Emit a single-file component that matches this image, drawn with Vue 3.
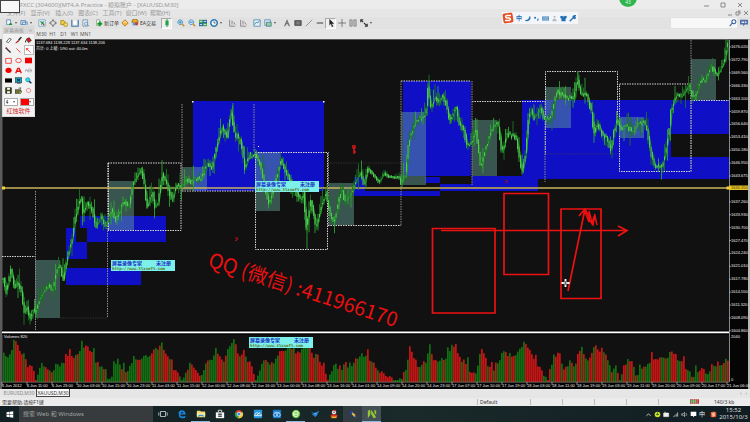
<script setup>
const icons = {
  plusDoc: [['M2 1h5v6H2z', '#e9f4ff', '#5d7fa5'], ['M5 7h4M7 5v4', 'none', '#18972b', 2]],
  windows: [['M1 2h6v5H1zM3 4h6v4H3z', '#dcebfa', '#4f7fae']],
  market: [['M1 1h8v8H1z', '#eef6fb', '#6fa3c4'], ['M3 3l4 3M4 7l3-4', 'none', '#2c9348', 1.5], ['M6 6h2v2H6z', '#c34a24']],
  target: [['M5 2a3 3 0 1 0 .1 0M5 0v3M5 7v3M0 5h3M7 5h3', 'none', '#666']],
  folderStar: [['M1 2h4l1 1v4H1z', '#f2cf48', '#a98318'], ['M5 5h4v4H5z', '#ffe789', '#ad8a1c']],
  panel: [['M1 1v8h8V1', 'none', '#3d78ac', 1.4], ['M3 2h4v5H3z', '#fff']],
  tester: [['M1 1h6v8H1z', '#dcebf7', '#7693ac'], ['M5 4a2 2 0 1 0 .1 0M7 7l2 2', 'none', '#688caf']],
  order: [['M2 1h4v7H2z', '#fff', '#8b9a8b'], ['M3 6h6M6 3v6', 'none', '#129b21', 2.4]],
  diamond: [['M5 1l4 4-4 4-4-4z', '#f4b63b', '#b0720c'], ['M3 5l2-2 2 2', 'none', '#fff']],
  robot: [['M1 4a4 4 0 0 1 8 0z', '#f0b72f', '#8b641a'], ['M2 5h5v3H2z', '#54a0da'], ['M7 4a2 2 0 1 0 .1 0z', '#d23a24']],
  candle: [['M5 0v10', 'none', '#188a31'], ['M3 2h4v6H3z', '#25a344']],
  bars: [['M2 1v8h7M5 2v5M7 4l2 3', 'none', '#777']],
  zoomIn: [['M4 1a3 3 0 1 0 .1 0', '#c6e6fa', '#3e88bd'], ['M6 6l3 3', 'none', '#c79525', 2], ['M2 4h4M4 2v4', 'none', '#247fb4']],
  zoomOut: [['M4 1a3 3 0 1 0 .1 0', '#c6e6fa', '#3e88bd'], ['M6 6l3 3', 'none', '#c79525', 2], ['M2 4h4', 'none', '#247fb4']],
  tiles: [['M0 1h5v4H0z', '#3ea147'], ['M5 1h5v4H5z', '#2c65b5'], ['M0 5h5v4H0z', '#2c65b5'], ['M5 5h5v4H5z', '#3ea147'], ['M1 3h3M6 3h3M1 7h3M6 7h3', 'none', '#fff']],
  clock: [['M5 1a4 4 0 1 0 .1 0', '#f4faff', '#2874af', 1.8], ['M5 3v2h2', 'none', '#444']],
  chart: [['M1 1h8v8H1z', '#e5f3fc', '#4c86af'], ['M2 7l2-3 2 1 2-3', 'none', '#3475a3']],
  picture: [['M1 1h7v7H1z', '#e5f3fc', '#4c86af'], ['M3 4h6v5H3z', '#9bcf8d', '#3c79a1']],
  textA: [['M2 9l3-7 3 7M3 6h4', 'none', '#666', 1.3]],
  label: [['M1 2h8v6H1z', '#666', '#444'], ['M3 4h4M3 6h4', 'none', '#aaa', .6]],
  slash: [['M1 9l8-8', 'none', '#888']],
  dash: [['M1 5h8', 'none', '#444', 1.3]],
  pointer: [['M3 0v8l2-2 1 4 2-1-2-3h3z', '#222']],
  cross: [['M5 0v10M0 5h10', 'none', '#666']],
  columns: [['M1 1h3v8H1zM6 1h3v8H6z', '#bbb', '#888']],
  arrows: [['M1 1l3 3M1 4V1h3M9 9L5 5M9 6v3H6', 'none', '#333', 1.4]],
  eraser: [['M2 7l4-5 3 1-4 5z', '#fff', '#333']],
  brush: [['M9 0L5 5', 'none', '#222', 2], ['M5 4l1 2-4 3H0z', '#b02a20']],
  bucket: [['M2 3l4-2 3 4-4 3z', '#e01818', '#222'], ['M2 4L0 8', 'none', '#222', 1.4]],
  pen: [['M1 1l7 7', 'none', '#333', 2], ['M1 1l2 1', 'none', '#d22', 1.5]],
  line: [['M2 2l6 6', 'none', '#e11']],
  arrow: [['M8 8L2 2M2 5V2h3', 'none', '#e11']],
  box: [['M1 2h8v7H1z', 'none', '#e11']],
  ring: [['M5 2a4 3 0 1 0 .1 0', 'none', '#e11']],
  redBox: [['M0 1h10v8H0z', '#f00000']],
  redOval: [['M5 1a4.5 3.800 0 1 0 .1 0z', '#f00000']],
  redA: [['M1 9l3-7h2l3 7M3 6h4', 'none', '#e11', 2]],
  grayText: [['M0 7l2-4 2 4M5 3h4v4H5zM0 5h10', 'none', '#aaa']],
  blackBox: [['M0 2h10v6H0z', '#000']],
  screen: [['M0 1h10v7H0z', '#13a8c5', '#333'], ['M3 3l4 3M3 6l4-3', 'none', '#123', 1.4], ['M3 9h5', 'none', '#333']],
  lens: [['M4 1a3 3 0 1 0 .1 0z', '#2de0e6', '#167ba8'], ['M6 6l3 3', 'none', '#125', 2]],
  save: [['M1 1h8v8H1z', '#454a12', '#111'], ['M3 1h4v3H3zM3 6h4v3H3z', '#fff']],
  open: [['M0 4h8v5H0z', '#777b1f', '#333'], ['M2 4l1 2h7L8 9', '#e7de66', '#444'], ['M5 2l3-1v2', 'none', '#333']],
  circle: [['M5 2a3 3 0 1 0 .1 0', 'none', '#e55']]
}
const toolbar = [
  ['plusDoc', 'New chart', 'wide'], ['windows', 'Profiles', 'wide sepS'], ['market', 'Market watch'], ['target', 'Data window'], ['folderStar', 'Navigator'], ['panel', 'Terminal'], ['tester', 'Strategy tester', 'sep'],
  ['order', '新订单', 'order'], ['diamond', 'Editor'], ['robot', 'EA交易', 'robot sep'],
  ['candle', 'Candles', 'pressed sepS'], ['zoomIn', 'Zoom in'], ['zoomOut', 'Zoom out'], ['tiles', 'Tile windows'], ['clock', 'Periods', 'wide sepS'],
  ['bars', 'Auto scroll'], ['bars', 'Chart shift', 'sepS'], ['chart', 'Indicators'], ['picture', 'Templates', 'wide sep'],
  ['textA', 'Text'], ['label', 'Label'], ['slash', 'Trend line'], ['dash', 'Horizontal line'], ['pointer', 'Cursor', 'pressed'], ['cross', 'Crosshair'], ['columns', 'Channel'], ['arrows', 'Arrows', 'wide sepS']
]
const palette = ['eraser', 'brush', 'bucket', 'pen', 'line', 'arrow', 'box', 'ring', 'redBox', 'redOval', 'redA', 'grayText', 'blackBox', 'screen', 'lens', 'save', 'open', 'circle']
const menus = ['文件(F)', '显示(V)', '插入(I)', '图表(C)', '工具(T)', '窗口(W)', '帮助(H)']
const frames = ['M30', 'H1', 'D1', 'W1', 'MN1']

const seeded = seed => () => (seed = (seed * 16807) % 2147483647) / 2147483647
const at = (pts, x) => {
  let i = 0
  while (i < pts.length - 2 && pts[i + 1][0] < x) i++
  const [x0, y0] = pts[i]
  const [x1, y1] = pts[i + 1]
  return y0 + ((y1 - y0) * (x - x0)) / (x1 - x0)
}
const pairs = s => s.trim().split(/\s+/).map(p => p.split(',').map(Number))

const price = pairs(`3,283 5,277 7,293 12,269 16,288 17,282 20,285 23,293 25,311 28,307 31,320 35,309 37,313 40,300 45,290 50,285 53,291 59,265 62,268 64,281 68,258 73,240
74,233 76,218 79,207 82,196 84,213 88,202 93,208 97,226 102,217 107,225 113,210 117,220 125,200 130,207 134,183 138,176 142,168 145,180 148,207 153,193 156,207 159,203 163,175 168,183 173,201 177,185 182,187 188,178 192,183 197,178 202,180 208,163 213,168 218,145 223,127 228,137 232,110 235,131 242,142 246,168 250,155
257,155 262,167 265,182 270,203 275,188 282,160 288,173 293,185 302,200 305,192 307,230 312,200 317,227 322,207 327,193 332,217 335,222 343,187 346,202 353,192 357,180 362,172 365,185 369,168 380,182 385,173 390,177 400,177 402,183 407,173 410,140 415,125 417,121 427,115 429,88 432,107 436,97 440,103 443,95 447,103 451,122 457,107 460,122
465,130 468,145 472,143 477,130 480,153 482,168 487,147 494,125 499,123 503,153 508,133 517,137 520,153 523,173 527,150 529,120 532,110 535,118 542,107 545,119 552,118 558,90 563,95 568,97 575,99 578,78 582,93 588,95 593,113 595,136 598,122 604,135 608,138 612,150 615,130 618,120 623,130 628,125 633,132 640,123 645,122 648,128 652,153 656,166 663,167 667,150 671,125 672,110 677,95 682,97 690,85 695,99 702,80 707,80 712,65 718,76 725,62 728,48`)
const r1 = seeded(77)
let wickA = ''
let wickB = ''
let body = ''
for (let x = 3; x <= 728; x += 1.5) {
  const quiet = x > 370 && x < 401 ? 0.3 : 1
  const y = at(price, x)
  const n = at(price, x + 1.5)
  const j = (r1() - 0.5) * 4 * quiet
  const up = (r1() * 5 + r1() ** 4 * 12) * quiet
  const down = (r1() * 5 + r1() ** 4 * 12) * quiet
  const seg = `M${x.toFixed(1)} ${(Math.min(y, n) - up).toFixed(1)}V${(Math.max(y, n) + down).toFixed(1)}`
  if (r1() > 0.4) wickA += seg
  else wickB += seg
  body += `M${x.toFixed(1)} ${(y + j - 1).toFixed(1)}V${(n + j + 1.4).toFixed(1)}`
}
wickB += 'M307 228V249M729 40V60M429 81V90M233 103V114M578 72V80'
const priceLine = 'M' + price.map(p => p.join(' ')).join('L')

const volume = pairs(`3,356 7,355 11,348 13,340 17,343 20,356 23,353 27,368 32,368 34,380 38,371 43,365 48,371 52,375 54,365 62,366 65,352 70,358 78,356 82,348 86,345 90,350 95,361 102,370 108,381 111,377 116,358 120,371 127,371 133,361 140,358 150,355 157,348 160,342 163,350 168,355 173,368 178,378 183,378 190,363 197,371 200,378 204,366 210,361 218,353 223,360 228,350 233,340 237,353 243,355 250,365
255,380 263,358 268,365 273,365 277,355 287,351 293,350 300,353 307,341 312,355 317,356 323,370 328,381 333,365 342,368 350,365 357,358 364,354 370,361 377,368 383,375 392,381 402,381 405,371 409,351 413,358 418,368 425,361 430,349 433,360 442,361 452,346 457,355 462,361 467,366 474,378 480,350 487,365 493,368 498,361
503,351 508,355 513,358 518,351 523,341 528,348 533,358 538,366 543,378 547,380 553,354 558,360 562,368 568,363 573,365 578,355 583,356 588,361 594,346 602,351 607,361 610,370 615,368 619,380 623,368 630,361 636,378 642,365 647,365 650,358 660,360 667,356 672,350 677,358 683,365 692,378 697,371 703,371 707,376 713,368 718,371 722,361 728,363`)
const redRuns = pairs('14,22 25,36 45,49 51,53 65,74 77,79 84,93 96,99 103,105 120,123 125,127 137,141 150,155 158,160 163,169 171,178 186,188 191,201 206,209 216,222 225,227 235,238 241,244 247,254 264,267 271,273 279,284 290,292 295,300 308,314 317,328 338,341 344,347 354,357 366,370 373,376 379,392 402,404 409,419 422,424 431,436 442,444 452,460 462,466 469,474 481,486 489,493 495,497 505,508 511,514 525,542 547,550 554,560 563,566 570,572 576,580 583,585 588,592 595,602 605,607 611,613 616,618 623,626 629,632 634,637 642,644 651,660 664,666 671,676 680,687 690,693 698,704 711,713 717,719 723,725 727,729')
const r2 = seeded(914)
const volumes = []
for (let x = 3; x < 729; x += 2) {
  const y = Math.min(381, at(volume, x) + (r2() - 0.55) * 6 - (r2() > 0.9 ? 6 : 0))
  volumes.push({ x, y: y > 379 ? 380 : y, red: redRuns.some(([a, b]) => x >= a && x < b) })
}

const zones = [[193, 101, 131, 90], [66, 228, 10, 14], [66, 242, 21, 17], [80, 216, 86, 12], [87, 228, 79, 14], [66, 268, 75, 17], [403, 81, 68, 95], [354, 177, 11, 15], [354, 191, 86, 5], [425, 177, 15, 6], [440, 184, 98, 7], [472, 176, 66, 9], [522, 100, 207, 34], [522, 134, 149, 23], [522, 157, 207, 22]]
const teals = [[35, 260, 25, 58], [108, 181, 26, 49], [182, 167, 25, 23], [255, 152, 25, 59], [329, 183, 25, 42], [401, 112, 25, 73], [472, 120, 25, 56], [545, 87, 26, 41], [619, 117, 25, 21], [691, 59, 25, 41]]
const axis = ['1676.020', '1672.790', '1669.560', '1666.330', '1663.100', '1659.870', '1656.640', '1653.410', '1650.180', '1646.950', '1643.675', '', '1637.260', '1633.930', '1630.700', '1627.470', '1624.240', '1621.010', '1617.780', '1614.550', '1611.320', '1608.090', '1604.860']
const times = ['6 Jun 2012', '6 Jun 11:00', '6 Jun 23:00', '10 Jun 03:00', '10 Jun 15:00', '10 Jun 23:00', '11 Jun 03:00', '11 Jun 15:00', '12 Jun 00:00', '12 Jun 08:00', '12 Jun 16:00', '13 Jun 00:00', '13 Jun 08:00', '13 Jun 16:00', '14 Jun 01:00', '14 Jun 09:00', '14 Jun 20:00', '14 Jun 23:00', '17 Jun 07:00', '17 Jun 10:00', '17 Jun 19:00', '18 Jun 03:00', '18 Jun 11:00', '18 Jun 19:00', '19 Jun 03:00', '19 Jun 11:00', '19 Jun 20:00', '20 Jun 09:00', '20 Jun 17:00', '21 Jun 06:00']
const stamps = [[255, 181], [111, 260], [249, 337]]
const tabs = ['EURUSD,M30', 'XAUUSD,M30']
</script>

<template>
  <main class="desktop">
    <header class="title">
      <span>FXCC (304600)(MT4.A Practice - 模拟账户 - [XAUUSD,M30]</span>
      <div class="win">
        <button aria-label="Minimize"><svg viewBox="0 0 8 8"><path d="M2 5h5" /></svg></button>
        <button aria-label="Restore"><svg viewBox="0 0 8 8"><path d="M2 2h4v4H2z" /></svg></button>
        <button aria-label="Close"><svg viewBox="0 0 8 8"><path d="M2 2l4 4M6 2L2 6" /></svg></button>
      </div>
    </header>
    <nav class="menu">
      <button v-for="m in menus" :key="m">{{ m }}</button>
      <div class="mdi">
        <button aria-label="Minimize chart"><svg viewBox="0 0 8 8"><path d="M2 6h4" /></svg></button>
        <button aria-label="Restore chart"><svg viewBox="0 0 8 8"><path d="M2 3h3v3H2zM4 2h2v3" /></svg></button>
        <button aria-label="Close chart"><svg viewBox="0 0 8 8"><path d="M2 2l4 4M6 2L2 6" /></svg></button>
      </div>
    </nav>
    <div class="tools">
      <button v-for="(t, i) in toolbar" :key="i" :class="t[2]" :aria-label="t[1]">
        <svg viewBox="0 0 10 10"><path v-for="(p, k) in icons[t[0]]" :key="k" :d="p[0]" :fill="p[1]" :stroke="p[2] || 'none'" :stroke-width="p[3] || 1" /></svg>
        <span v-if="t[0] === 'order' || t[0] === 'robot'">{{ t[1] }}</span>
        <i v-if="t[2] && t[2].includes('wide')" />
      </button>
      <label class="search">
        <input type="search" aria-label="Search" />
        <svg viewBox="0 0 10 10"><path d="M6 1a2.5 2.5 0 1 0 .1 0M4 5L1 9" fill="none" stroke="#3b61a0" stroke-width="1.4" /></svg>
      </label>
      <button class="chat" aria-label="Messages"><svg viewBox="0 0 10 10"><path d="M0 1h10v6H6L4 9V7H0z" fill="#4e6ea8" /><path d="M2 3h3v2H2zM6 3h2v2H6z" fill="#dfe8f5" /></svg></button>
    </div>
    <div class="frames"><button v-for="f in frames" :key="f">{{ f }}</button></div>

    <svg class="chart" viewBox="0 39 750 350" role="img" aria-label="XAUUSD M30">
      <rect x="0" y="39" width="750" height="350" fill="#111" />
      <rect x="0" y="39" width="2.5" height="350" fill="#5c5c5c" />
      <rect x="729" y="39" width="19" height="350" fill="#050505" />
      <rect x="748" y="39" width="2" height="350" fill="#b9b9b9" />
      <rect x="0" y="38.5" width="750" height="1.2" fill="#777" />
      <rect v-for="(z, i) in zones" :key="'z' + i" :x="z[0]" :y="z[1]" :width="z[2]" :height="z[3]" fill="#0f0fc6" />
      <path d="M440 187.500H538" stroke="#11114a" />
      <rect v-for="(z, i) in teals" :key="'t' + i" :x="z[0]" :y="z[1]" :width="z[2]" :height="z[3]" fill="#65a297" fill-opacity=".47" />
      <g fill="none" stroke-dasharray="1.500 1">
        <path d="M2 256.500H35M108.500 163V231M108 163H181V230.500H108M182 191H254M255.500 152.500H327.500V249.500H255.500zM328 225.500H401M401 81H471M472 101.500H545M545.500 155V71.500H617.500V120M619.500 84H691V171.500H619.500zM691 100.500H729" stroke="#d5d5d5" />
        <path d="M35.500 191V331M107.500 163V318M182 104V190M254 104V152M328.500 152V225M401 81V225M472 81V185M545 101V182M691 40V171" stroke="#8d8d8d" />
        <path d="M328 163H401M545 154H618M60 318H107" stroke="#444" stroke-width=".6" />
      </g>
      <path d="M2 188H729" stroke="#c9b45c" stroke-width="1.500" />
      <path :d="priceLine" fill="none" stroke="#24992c" stroke-width="1.200" />
      <path :d="wickA" stroke="#1b7423" stroke-width=".9" />
      <path :d="wickB" stroke="#2fa234" stroke-width=".9" />
      <path :d="body" stroke="#58cf5b" stroke-width=".9" />
      <rect x="2" y="186.500" width="3" height="3" fill="#f3d33b" />
      <rect x="726.500" y="186.500" width="3" height="3" fill="#f3d33b" />
      <g fill="#fff"><rect x="192" y="101" width="1.500" height="1.500" /><rect x="323" y="101" width="1.500" height="1.500" /><rect x="258" y="146" width="1" height="1" /></g>
      <g fill="none" stroke="#a91111"><path d="M352 146h3v2h-2l2 3M354 150v4M355 151v2" stroke="#e11616" stroke-width="1.300" /><path d="M235 238h3l-2 3M235 241l3-2M505 180l3 3M508 180l-3 3" /></g>

      <g fill="none" stroke="#ee1111" stroke-width="1.700">
        <path d="M432.500 228.500H495V313H432.500zM504 193.500H548.500V274.500H504zM561 209H601V298.500H561z" />
        <path d="M441 230.500H627M618 226L627 230.500L618 236" />
        <path d="M568 291L585 209M579 216L585 209L590 219" />
        <path d="M585 212L589 222L589 211L592 223L595 214L593 225L587 217M595 216L597 225" stroke-width="1.500" />
      </g>
      <path d="M565.500 279V287M561.500 283H569.500" stroke="#fff" stroke-width="1.800" />
      <path d="M565.500 281V285M563.500 283H567.500" stroke="#222" stroke-width=".6" />
      <text class="contact" transform="translate(207 266) rotate(18)">QQ (微信) :411966170</text>

      <rect x="2" y="330" width="727" height="5" fill="#050505" />
      <path d="M2 332.300H729" stroke="#fff" stroke-width="1.700" />
      <path d="M729.500 40V388" stroke="#aaa" stroke-width=".8" />
      <g class="tiny">
        <g v-for="(a, i) in axis" :key="'a' + i">
          <path :d="`M729 ${47 + i * 12.9}h2`" stroke="#bbb" stroke-width=".7" />
          <text x="731" :y="48 + i * 12.9">{{ a }}</text>
        </g>
        <rect x="729" y="185.500" width="19" height="4.500" fill="#e8c62b" />
        <text x="731" y="189" class="dark">1640.350</text>
        <text x="36" y="44">1137.684 1138.228 1137.634 1138.206</text>
        <text x="36" y="50">共计: 0 上破: 1/90 out: 40.0m</text>
      </g>

      <rect v-for="v in volumes" :key="v.x" :x="v.x" :y="v.y" width="1.700" :height="382 - v.y" :fill="v.red ? '#c81414' : '#127012'" />
      <rect x="2" y="382" width="746" height="7" fill="#030303" />
      <path d="M2 382.200H729" stroke="#999" stroke-width=".6" />
      <g class="tiny">
        <text x="4" y="338">Volumes 820</text>
        <text x="731" y="338">2040</text><text x="731" y="381">0</text>
        <g v-for="(t, i) in times" :key="t">
          <path :d="`M${2 + i * 25} 382v3`" stroke="#bbb" stroke-width=".7" />
          <text :x="2 + i * 25" y="387">{{ t }}</text>
        </g>
      </g>
      <g v-for="s in stamps" :key="s[0]" class="stamp">
        <rect :x="s[0]" :y="s[1]" width="64" height="11" fill="#7ef0ea" />
        <text :x="s[0] + 1" :y="s[1] + 5" class="name">屏幕录像专家</text>
        <text :x="s[0] + 45" :y="s[1] + 5" class="name">未注册</text>
        <text :x="s[0] + 1" :y="s[1] + 10" class="url">http://www.tlxsoft.com</text>
      </g>
    </svg>

    <div class="tabs">
      <button v-for="(t, i) in tabs" :key="t" :class="{ on: i === 1 }">{{ t }}</button>
      <span>‹ &nbsp; ›</span>
    </div>
    <div class="status">
      <span class="help">需要帮助,请按F1键</span>
      <span class="def">Default</span><span /><span /><span /><span /><span />
      <span class="net"><svg viewBox="0 0 10 5"><path d="M0 0h10v5H0z" fill="#b7352b" /><path d="M0 1h6v3H0z" fill="#4d9a3c" /><path d="M2 0v5M4 0v5M6 0v5M8 0v5" stroke="#ddd" stroke-width=".6" /></svg></span>
      <span class="kb">140/3 kb</span>
    </div>

    <footer class="taskbar">
      <button class="start" aria-label="Start"><svg viewBox="0 0 12 12"><path d="M2 3l4-.6v3.300H2zM6.500 2.300L11 1.700v4H6.500zM2 6.300h4v3.300L2 9zM6.500 6.300H11v4l-4.500-.6z" fill="#fff" /></svg></button>
      <input class="find" aria-label="Search Windows" placeholder="搜索 Web 和 Windows" />
      <button class="app" aria-label="Task view"><svg viewBox="0 0 12 12"><path d="M3 3h6v6H3zM1 4v4M11 4v4" fill="none" stroke="#c8d0d4" /></svg></button>
      <button class="app" aria-label="Edge"><svg viewBox="0 0 12 12"><path d="M1.500 6C2 0 10 0 10.500 6.500H4C4 9.500 8 9.500 10 8.500v2C5 12.500 1 10 2.500 6 3 4.500 5 3.500 6 3.500" fill="#1685dc" /><path d="M4.300 5.200h3.500C7.500 3 5 3 4.300 5.200z" fill="#162326" /></svg></button>
      <button class="app run" aria-label="Explorer"><svg viewBox="0 0 12 12"><path d="M1 2h4l1 1h5v7H1z" fill="#f6d66e" /><path d="M1 5h10v3H1z" fill="#ffefa8" /><path d="M3 7h6v3H8V8.500H4V10H3z" fill="#3398cf" /></svg></button>
      <button class="app" aria-label="Store"><svg viewBox="0 0 12 12"><path d="M1 4h10v7H1z" fill="#f5f5f5" /><path d="M4 4V1.500h4V4" fill="none" stroke="#f5f5f5" /><path d="M4 5.500h1.800v1.800H4zM6.200 5.500H8v1.800H6.200zM4 7.700h1.800v1.800H4zM6.200 7.700H8v1.800H6.200z" fill="#203035" /></svg></button>
      <button class="app" aria-label="Chrome"><svg viewBox="0 0 12 12"><path d="M6 6L1.700 3.500A5 5 0 0 1 10.500 4H6z" fill="#e13d2e" /><path d="M6 6h5A5 5 0 0 1 5 11z" fill="#f4c632" /><path d="M11 6a5 5 0 0 0-.7-2H6v3l-1 4a5 5 0 0 0 6-5" fill="#f4c632" /><path d="M6 6v2l-1.500 3A5 5 0 0 1 1.700 3.500z" fill="#2ba153" /><circle cx="6" cy="6" r="2.200" fill="#3f81e8" stroke="#fff" stroke-width=".8" /></svg></button>
      <button class="app" aria-label="Cloud"><svg viewBox="0 0 12 12"><rect x="1" y="1" width="10" height="10" rx="1" fill="#2797df" /><path d="M2 8c0-3 3-5 5-2 1-1 3 0 3 2zM4 8l4-4" fill="none" stroke="#fff" /></svg></button>
      <button class="app" aria-label="Network disk"><svg viewBox="0 0 12 12"><rect x="1" y="1" width="10" height="10" rx="1" fill="#1976c6" /><path d="M2 7a2 2 0 0 1 4 0 2 2 0 0 0 4 0 2 2 0 0 0-4 0 2 2 0 0 1-4 0M3 4h6" fill="none" stroke="#b8e3ff" /></svg></button>
      <button class="app run" aria-label="360 Browser"><svg viewBox="0 0 12 12"><circle cx="6" cy="6" r="5" fill="#63bd3d" /><path d="M3 6h6M8.500 7.500a3 3 0 1 1 .4-2" fill="none" stroke="#eaffd9" stroke-width="1.500" /></svg></button>
      <button class="app" aria-label="Thunder"><svg viewBox="0 0 12 12"><path d="M1 3l4 2 6-3-3 6-2 2-1-2-3-1 2-1z" fill="#2587d6" /><path d="M5 5l3 1" stroke="#7ac5ff" /></svg></button>
      <button class="app" aria-label="QQ Games"><svg viewBox="0 0 12 12"><circle cx="6" cy="4" r="2.500" fill="#eee" /><path d="M2 7l4-1 4 1v3H2z" fill="#d83422" /><path d="M3 9h6v2H3z" fill="#f5b12b" /><path d="M4 2l4-1 1 2z" fill="#e13222" /><path d="M5 4h2" stroke="#333" /></svg></button>
      <button class="app lit" aria-label="MetaTrader"><svg viewBox="0 0 12 12"><path d="M2 2l4 1 1 2-3 2z" fill="#2742b5" /><path d="M5 4l4 3-1 3-3-3z" fill="#f0c33d" /><path d="M8 8l2 2" stroke="#2a53ca" stroke-width="1.500" /></svg></button>
      <button class="app lit run" aria-label="Recorder"><svg viewBox="0 0 12 12"><path d="M1 11V2l3-1v6zM5 1l6 9-3 1-3-5zM9 1l2 1v5L9 5z" fill="#95c832" /></svg></button>
      <div class="tray">
        <svg viewBox="0 0 10 10"><path d="M2 7l3-3 3 3" fill="none" stroke="#ddd" stroke-width="1.200" /></svg>
        <svg viewBox="0 0 10 10"><circle cx="5" cy="5" r="4" fill="#d1df28" /><path d="M5 2v4M3 5h4" stroke="#357921" stroke-width="1.500" /></svg>
        <svg viewBox="0 0 10 10"><path d="M1 3h7v5H1zM3 1v2" fill="#eee" stroke="#eee" /></svg>
        <svg viewBox="0 0 10 10"><path d="M2 8h1M4 8V6M6 8V4M8 8V2" stroke="#bbb" stroke-width="1.300" /></svg>
        <svg viewBox="0 0 10 10"><path d="M1 4h2l2-2v6L3 6H1zM7 3q2 2 0 4" fill="none" stroke="#ccc" /></svg>
        <svg viewBox="0 0 10 10"><path d="M1 1h8v6H6L5 9 4 7H1z" fill="#fff" /></svg>
        <span>中</span>
        <svg class="sg" viewBox="0 0 10 10"><rect x="1" y="1" width="8" height="8" rx="2" fill="#e85724" /><path d="M7 3H4q-2 1 0 2h2q2 1 0 2H3" fill="none" stroke="#fff" stroke-width="1.200" /></svg>
      </div>
      <time><span>15:52</span><span>2015/10/3</span></time>
    </footer>

    <div class="thumb" />
    <aside class="palette" aria-label="屏幕画板">
      <h2>屏幕画板<span>×</span></h2>
      <div class="grid">
        <button v-for="p in palette" :key="p" :aria-label="p" :class="{ sel: p === 'arrow' }"><svg viewBox="0 0 10 10"><path v-for="(q, k) in icons[p]" :key="k" :d="q[0]" :fill="q[1]" :stroke="q[2] || 'none'" :stroke-width="q[3] || 1" /></svg></button>
      </div>
      <div class="picks">
        <label><select aria-label="Line width"><option>4</option></select><i /></label>
        <label><select class="color" aria-label="Color"><option></option></select><i /></label>
      </div>
      <a href="#">红烛软件</a>
    </aside>
    <div class="ime">
      <svg class="logo" viewBox="0 0 12 12"><rect x="1" y="1" width="10" height="10" rx="2" fill="#e34f24" transform="rotate(-8 6 6)" /><path d="M9 3.500H5Q2 4.500 5 6h2q3 1 0 2.500H3" fill="none" stroke="#fff" stroke-width="1.500" /></svg>
      <b>中</b>
      <svg viewBox="0 0 10 10"><path d="M8 1a4 4 0 1 1-7 6Q7 8 8 1z" fill="#2470b5" /></svg>
      <svg viewBox="0 0 10 10"><circle cx="3" cy="4" r="1.500" fill="#2470b5" /><path d="M7 5q1 2-1 3" stroke="#2470b5" stroke-width="1.500" fill="none" /></svg>
      <svg viewBox="0 0 10 10"><path d="M0 2h10v6H0z" fill="#5894c9" /><path d="M1 4h8M1 6h8" stroke="#fff" stroke-width=".8" stroke-dasharray="1 .6" /></svg>
      <svg viewBox="0 0 10 10"><path d="M5 1a1.500 1.500 0 1 0 .1 0zM2 9q0-4 3-4t3 4z" fill="#b7bdc5" /></svg>
      <svg viewBox="0 0 10 10"><path d="M0 2l3-1q2 2 4 0l3 1-1 3H8v4H2V5H1z" fill="#2470b5" /></svg>
      <svg viewBox="0 0 10 10"><path d="M1 9l5-5M6 4q-1-3 3-3L7.500 3 9 4q0 2-3 0" fill="none" stroke="#2470b5" stroke-width="1.800" /></svg>
    </div>
    <div class="ball">43</div>
  </main>
</template>

<style>
body { margin: 0; background: #e6e6e6; }
</style>

<style scoped>
.desktop { position: relative; overflow: hidden; font-family: "Noto Sans", "Noto Sans CJK SC", sans-serif; font-size: 6px; line-height: 8px; color: #555; background: #e3e3e3; }
* { box-sizing: border-box; }
button { border: 0; padding: 0; margin: 0; background: none; font: inherit; color: inherit; display: flex; align-items: center; justify-content: center; }
svg { display: block; flex: none; }
.title { height: 9px; display: flex; align-items: center; justify-content: space-between; padding-left: 20px; background: #ececec; color: #999; }
.win { display: flex; gap: 9px; padding-right: 6px; }
.win svg, .mdi svg { width: 8px; height: 8px; fill: none; stroke: #888; stroke-width: 1; }
.menu { height: 8px; display: flex; gap: 4px; padding-left: 6px; background: #e6e6e6; color: #999; }
.menu > button { width: 20px; white-space: nowrap; }
.mdi { margin-left: auto; display: flex; }
.tools { height: 12px; display: flex; align-items: center; padding-left: 3px; background: #e2e2e2; }
.tools button { width: 11px; height: 11px; gap: 1px; white-space: nowrap; color: #333; }
.tools svg { width: 8px; height: 8px; }
.tools button.wide { width: 15px; gap: 2px; }
.tools button.order { width: 24px; font-size: 5px; }
.tools button.robot { width: 27px; font-size: 5px; }
.tools .sep { margin-right: 4px; }
.tools .sepS { margin-right: 3px; }
.tools .pressed { background: #efefef; border: 1px solid #aaa; border-right-color: #fff; border-bottom-color: #fff; }
i { flex: none; border: 1px solid transparent; border-top: 2px solid #555; border-bottom: 0; }
.search { margin-left: auto; width: 66px; height: 10px; background: #f7f7f7; display: flex; align-items: center; }
.search input { flex: 1; min-width: 0; height: 8px; border: 0; padding: 0; background: none; font-size: 6px; }
.tools .chat { margin: 0 1px; }
.frames { height: 10px; display: flex; align-items: center; padding-left: 36px; background: #e6e6e6; font-size: 5px; }
.frames button { width: 11px; }
.chart { width: 100%; height: auto; }
.tiny text { font: 4px "Liberation Sans", "Noto Sans CJK SC", sans-serif; fill: #eee; }
.tiny text.dark { fill: #443800; }
.contact { font: 20px "Noto Sans CJK SC", sans-serif; fill: #e81010; }
.stamp .name { font: bold 5px "Noto Sans CJK SC", sans-serif; fill: #1c2fc4; }
.stamp .url { font: bold 4px "DejaVu Sans Mono", monospace; fill: #53731c; }
.tabs { height: 9px; display: flex; align-items: flex-start; background: #e6e6e6; font-size: 5px; color: #888; padding-left: 2px; }
.tabs button { width: 34px; height: 8px; }
.tabs button.on { background: #fafafa; color: #333; border: 1px solid #444; border-top: 0; }
.tabs span { margin-left: auto; padding-right: 3px; }
.status { height: 8px; display: flex; align-items: center; background: #ececec; color: #333; font-size: 5px; }
.status span { width: 32px; height: 6px; line-height: 6px; border-left: 1px solid #bbb; }
.status .help { flex: 1; border: 0; padding-left: 2px; }
.status .def { width: 53px; padding-left: 2px; }
.status .net { width: 24px; border: 0; }
.status .net svg { width: 9px; height: 5px; }
.status .kb { width: 36px; border: 0; }
.taskbar { height: 16px; display: flex; align-items: stretch; background: linear-gradient(90deg, #111e22, #1a2929 55%, #101d23); }
.start { width: 19px; }
.start svg { width: 9px; height: 9px; }
.find { width: 134px; border: 0; padding: 0 4px; background: #373b3d; color: #bbb; font: 6px "Noto Sans", "Noto Sans CJK SC", sans-serif; }
.find::placeholder { color: #a2a2a2; opacity: 1; }
.app { width: 19px; border-bottom: 1px solid transparent; }
.app svg { width: 10px; height: 10px; }
.app.run { border-bottom-color: #88bbdc; }
.app.lit { background: #303c40; }
.app.lit.run { background: #435156; }
.tray { margin-left: auto; display: flex; align-items: center; gap: 2px; color: #eee; }
.tray svg { width: 7px; height: 7px; }
.tray .sg { margin-left: 3px; }
time { width: 33px; display: flex; flex-direction: column; align-items: center; justify-content: center; color: #ddd; line-height: 7px; }
.thumb { position: absolute; left: 0; top: 0; width: 20px; height: 13px; background: #f8f8f8; border: 1px solid #444; }
.palette { position: absolute; left: 2px; top: 25px; width: 33px; background: #f2f2f2; border: 1px solid #ddd; display: flex; flex-direction: column; align-items: center; }
.palette h2 { margin: 0; width: 100%; height: 8px; display: flex; justify-content: space-between; padding: 0 1px; background: #d8d8d8; color: #999; font: 5px/8px "Noto Sans CJK SC", sans-serif; }
.grid { display: grid; grid-template-columns: repeat(3, 1fr); grid-auto-rows: 10px; width: 100%; padding-top: 1px; }
.grid svg { width: 7px; height: 7px; }
.grid .sel { background: #fff; border: 1px solid #bbb; }
.picks { display: flex; gap: 2px; padding-top: 3px; }
.picks label { width: 14px; height: 8px; display: flex; align-items: center; background: #fff; border: 1px solid #aaa; }
select { appearance: none; border: 0; padding: 0 1px; width: 8px; height: 6px; background: #fff; font: 5px/6px "Liberation Sans", sans-serif; }
select.color { background: #f00; }
.palette a { color: #d12a2a; text-decoration: none; font-size: 6px; line-height: 9px; padding-top: 1px; }
.ime { position: absolute; right: 172px; top: 12px; height: 12px; display: flex; align-items: center; gap: 2px; padding-right: 2px; background: #f3f5f8; color: #2470b5; }
.ime svg { width: 7px; height: 7px; }
.ime svg.logo { width: 12px; height: 12px; }
.ball { position: absolute; right: 113px; top: -12px; width: 18px; height: 19px; border-radius: 50%; background: #2fb64c; color: #dff5e3; text-align: center; font-size: 5px; line-height: 8px; padding-top: 10px; }
</style>
